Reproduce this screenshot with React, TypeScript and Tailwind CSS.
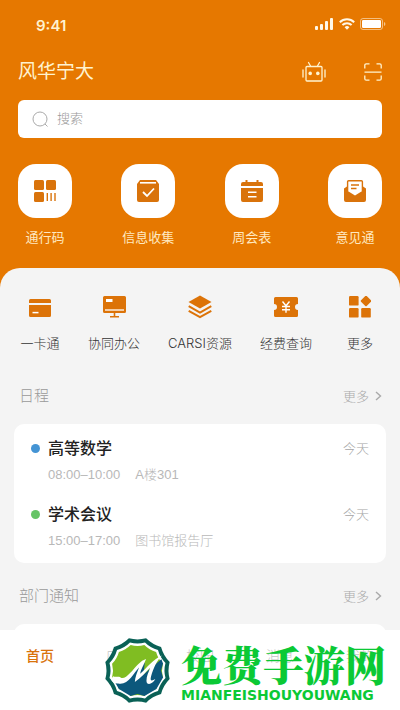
import type { ReactNode } from "react";

const quickActions = [
  { label: "通行码", icon: <PassCodeIcon /> },
  { label: "信息收集", icon: <CollectIcon /> },
  { label: "周会表", icon: <CalendarIcon /> },
  { label: "意见通", icon: <MailIcon /> },
];

const services = [
  { label: "一卡通", icon: <CardIcon /> },
  { label: "协同办公", icon: <MonitorIcon /> },
  { label: "CARSI资源", icon: <LayersIcon /> },
  { label: "经费查询", icon: <TicketIcon /> },
  { label: "更多", icon: <MoreIcon /> },
];

const schedule = [
  { title: "高等数学", time: "08:00–10:00", place: "A楼301", day: "今天", dot: "bg-[#4494d4]" },
  { title: "学术会议", time: "15:00–17:00", place: "图书馆报告厅", day: "今天", dot: "bg-[#66c466]" },
];

const tabs = ["首页", "应用", "校园", "消息", "我的"];

export default function App() {
  return (
    <div className="relative flex h-screen flex-col overflow-hidden bg-[#e67800] font-['Inter','Noto_Sans_CJK_SC',sans-serif]">
      <main className="min-h-0 flex-1 overflow-y-auto [scrollbar-width:none]">
        <StatusBar />
        <header className="px-[18px]">
          <div className="flex h-8 items-center justify-between text-[#fff3cf]">
            <h1 className="text-[19px] leading-8">风华宁大</h1>
            <div className="flex items-center gap-[38px]">
              <button type="button" aria-label="助手">
                <RobotIcon />
              </button>
              <button type="button" aria-label="扫一扫">
                <ScanIcon />
              </button>
            </div>
          </div>
          <label className="mt-3 flex h-[38px] items-center gap-2 rounded-md bg-white px-[14px]">
            <SearchIcon />
            <input
              type="search"
              aria-label="搜索"
              placeholder="搜索"
              className="min-w-0 flex-1 bg-transparent text-[13px] font-light outline-none placeholder:text-[#999]"
            />
          </label>
          <div className="mt-[26px] flex justify-between">
            {quickActions.map((action) => (
              <button key={action.label} type="button" className="flex w-[54px] flex-col items-center">
                <span className="flex size-[54px] items-center justify-center rounded-[18px] bg-white text-[#d9730b]">
                  {action.icon}
                </span>
                <span className="mt-[9px] text-[13px] leading-5 whitespace-nowrap text-[#ffe9c0]">{action.label}</span>
              </button>
            ))}
          </div>
        </header>

        <section className="mt-[21px] rounded-t-[20px] bg-[#f4f4f4] px-[14px] pt-[26px]">
          <div className="flex justify-between px-[6px]">
            {services.map((service) => (
              <button key={service.label} type="button" className="flex min-w-10 flex-col items-center text-[#dc7308]">
                <span className="flex h-[26px] items-center">{service.icon}</span>
                <span className="mt-[13px] text-[13px] leading-5 font-light text-[#333]">{service.label}</span>
              </button>
            ))}
          </div>

          <div className="pt-[31px]">
            <SectionTitle title="日程" />
          </div>
          <ul className="mt-4 rounded-[10px] bg-white pt-[14px] pb-[10px]">
            {schedule.map((item) => (
              <li key={item.title} className="flex h-[66px] px-[17px] last:h-[49px]">
                <span className={`mt-[6px] mr-2 size-[9px] shrink-0 rounded-full ${item.dot}`} />
                <div className="flex-1">
                  <h3 className="text-base leading-5 font-medium text-[#222]">{item.title}</h3>
                  <p className="mt-[7px] flex gap-[15px] font-['Liberation_Sans','Noto_Sans_CJK_SC',sans-serif] text-[13px] leading-5 font-light text-[#b8b8b8]">
                    <time>{item.time}</time>
                    <span>{item.place}</span>
                  </p>
                </div>
                <span className="text-[13px] leading-5 font-light text-[#a5a5a5]">{item.day}</span>
              </li>
            ))}
          </ul>

          <div className="pt-[21px]">
            <SectionTitle title="部门通知" />
          </div>
          <div className="mt-4 h-4 rounded-t-[10px] bg-white" />
        </section>
      </main>

      <nav className="flex h-20 shrink-0 bg-white pt-[15px]">
        {tabs.map((tab, index) => (
          <a
            key={tab}
            href="#"
            className={`flex-1 text-center text-sm leading-[22px] ${index === 0 ? "font-medium text-[#d9730b]" : "font-light text-[#c4c4c4]"}`}
          >
            {tab}
          </a>
        ))}
      </nav>

      <div className="pointer-events-none absolute right-[14px] bottom-[7px] flex items-end gap-[10px] text-[#0bc935]">
        <SiteLogo />
        <div className="flex flex-col">
          <strong className="font-['Noto_Serif_CJK_SC','Noto_Sans_CJK_SC',serif] text-[41px] leading-[46px] font-black whitespace-nowrap">
            免费手游网
          </strong>
          <span className="font-['DejaVu_Sans',sans-serif] text-[14px] leading-4 font-bold whitespace-nowrap">
            MIANFEISHOUYOUWANG
          </span>
        </div>
      </div>
    </div>
  );
}

function StatusBar() {
  return (
    <div className="flex h-14 items-center justify-between pr-[14px] pl-9 text-[#fff3cf]">
      <span className="mb-1 text-[15px] leading-5 font-semibold">9:41</span>
      <div className="mb-2 flex items-center gap-[5px] text-[#fff8e8]">
        <svg width="19" height="12" viewBox="0 0 19 12" fill="currentColor" aria-hidden="true">
          <rect x="0" y="8" width="3" height="4" rx="1" />
          <rect x="5" y="6" width="3" height="6" rx="1" />
          <rect x="10" y="3" width="3" height="9" rx="1" />
          <rect x="15" y="0" width="3" height="12" rx="1" />
        </svg>
        <svg width="16" height="12" viewBox="0 0 16 12" fill="none" stroke="currentColor" strokeWidth="2" aria-hidden="true">
          <path d="M.8 4.2a10.3 10.3 0 0 1 14.4 0M3.4 7a6.6 6.6 0 0 1 9.2 0" />
          <path d="M5.6 9.2a3.4 3.4 0 0 1 4.8 0L8 11.8Z" fill="currentColor" stroke="none" />
        </svg>
        <svg width="26" height="12" viewBox="0 0 26 12" aria-hidden="true">
          <rect x=".5" y=".5" width="22" height="11" rx="2.5" fill="none" stroke="currentColor" strokeOpacity=".55" />
          <rect x="2" y="2" width="19" height="8" rx="1.2" fill="#fff" />
          <path d="M24 4v4q1.4-.6 1.4-2T24 4" fill="currentColor" opacity=".6" />
        </svg>
      </div>
    </div>
  );
}

function SectionTitle({ title }: { title: string }) {
  return (
    <div className="flex items-center justify-between pr-1 pl-[5px]">
      <h2 className="text-[15px] leading-6 font-light text-[#999]">{title}</h2>
      <a href="#" className="flex items-center gap-[6px] text-[13px] leading-5 font-light text-[#aaa]">
        更多
        <svg width="7" height="10" viewBox="0 0 7 10" fill="none" stroke="currentColor" strokeWidth="1.4" aria-hidden="true">
          <path d="m1 1 4.5 4L1 9" />
        </svg>
      </a>
    </div>
  );
}

function Icon({ size = 22, children }: { size?: number; children: ReactNode }) {
  return (
    <svg width={size} height={size} viewBox={`0 0 ${size} ${size}`} fill="currentColor" aria-hidden="true">
      {children}
    </svg>
  );
}

function RobotIcon() {
  return (
    <svg width="24" height="22" viewBox="0 0 24 22" fill="none" stroke="currentColor" strokeWidth="1.3" strokeLinecap="round" aria-hidden="true">
      <rect x="4" y="5.5" width="16" height="14.5" rx="1" />
      <path d="m6.500 1.500 2 3.500M17.500 1.500l-2 3.500M1 9v7M23 9v7" />
      <circle cx="8.2" cy="12.4" r="1.8" fill="currentColor" stroke="none" />
      <circle cx="15.8" cy="12.4" r="1.8" fill="currentColor" stroke="none" />
    </svg>
  );
}

function ScanIcon() {
  return (
    <svg width="18" height="18" viewBox="0 0 18 18" fill="none" stroke="currentColor" strokeWidth="1.3" aria-hidden="true">
      <path d="M.8 5.5V2.3Q.8.8 2.3.8h3.2M12.5.8h3.2q1.5 0 1.5 1.5v3.2M.8 12.5v3.2q0 1.5 1.5 1.5h3.2M12.5 17.2h3.2q1.5 0 1.5-1.5v-3.2M.5 9.2h17" />
    </svg>
  );
}

function SearchIcon() {
  return (
    <svg width="17" height="17" viewBox="0 0 17 17" fill="none" stroke="#aaa" aria-hidden="true">
      <circle cx="8" cy="8" r="7" />
      <path d="m13 13 2.5 2.5" />
    </svg>
  );
}

function PassCodeIcon() {
  return (
    <Icon>
      <rect x="0" y="0" width="10" height="10" rx="1.5" />
      <rect x="12" y="0" width="10" height="10" rx="1.5" />
      <rect x="0" y="12" width="10" height="10" rx="1.5" />
      <path d="M12.6 13h1.4v8h-1.4zM16.4 13h1.4v8h-1.4zM20.3 13h1.4v8h-1.4z" />
    </Icon>
  );
}

function CollectIcon() {
  return (
    <Icon>
      <path d="M3 0h16l3 4v16a2 2 0 0 1-2 2H2a2 2 0 0 1-2-2V4Z" />
      <path d="M3 2.8h16" stroke="#fff" strokeWidth="1.6" />
      <path d="m6 12 4 4 7-7.500" fill="none" stroke="#fff" strokeWidth="1.8" />
    </Icon>
  );
}

function CalendarIcon() {
  return (
    <Icon>
      <path d="M4.5 0h2v2h9V0h2v2H20a2 2 0 0 1 2 2v2H0V4a2 2 0 0 1 2-2h2.5ZM0 8h22v12a2 2 0 0 1-2 2H2a2 2 0 0 1-2-2Z" />
      <path d="M7 12.3h8.500M7 16.7h8.500" stroke="#fff" strokeWidth="1.5" />
    </Icon>
  );
}

function MailIcon() {
  return (
    <Icon>
      <path d="M0 8.500 3 6.500v4l8 5 8-5v-4l3 2V20a2 2 0 0 1-2 2H2a2 2 0 0 1-2-2Z" />
      <path d="M3.600 11V1.800q0-1 1-1h12.800q1 0 1 1V11" fill="none" stroke="currentColor" strokeWidth="1.4" />
      <path d="M7 5h8M7 8.500h5.500" stroke="currentColor" strokeWidth="1.3" />
    </Icon>
  );
}

function CardIcon() {
  return (
    <Icon>
      <path d="M0 7V4.500Q0 3 1.500 3h19Q22 3 22 4.500V7ZM0 9h22v10.500q0 1.500-1.500 1.500h-19Q0 21 0 19.500Z" />
      <path d="M3.500 16.600h6" stroke="#fff" strokeWidth="1.5" />
    </Icon>
  );
}

function MonitorIcon() {
  return (
    <svg width="23" height="22" viewBox="0 0 23 22" fill="currentColor" aria-hidden="true">
      <path d="M1.500 0h20Q23 0 23 1.500v14q0 1.500-1.500 1.500H12.300v3H16v1.500H7V20h3.700v-3H1.500Q0 17 0 15.500v-14Q0 0 1.500 0Z" />
      <path d="M3 3h6.500v3H3z" fill="#fff" />
      <path d="M2 14h19" stroke="#fff" strokeWidth="1.3" />
    </svg>
  );
}

function LayersIcon() {
  return (
    <svg width="24" height="24" viewBox="0 0 24 24" fill="none" stroke="currentColor" strokeWidth="2" aria-hidden="true">
      <path d="M12 .5 23.500 7 12 13.500.5 7Z" fill="currentColor" stroke="none" />
      <path d="m.7 11.200 11.300 6.300 11.300-6.300M.7 15.900 12 22.200l11.300-6.300" />
    </svg>
  );
}

function TicketIcon() {
  return (
    <svg width="24" height="20" viewBox="0 0 24 20" fill="currentColor" aria-hidden="true">
      <path d="M1.500 0h21Q24 0 24 1.500V7a3 3 0 0 0 0 6v5.500q0 1.500-1.500 1.500h-21Q0 20 0 18.500V13a3 3 0 0 0 0-6V1.500Q0 0 1.500 0Z" />
      <path d="m8.500 4.500 3.500 4.300 3.500-4.300M12 8.800v7M8 9.500h8M8 12.800h8" fill="none" stroke="#fff" strokeWidth="1.4" />
    </svg>
  );
}

function MoreIcon() {
  return (
    <Icon>
      <rect x="0" y="0" width="9.6" height="9.6" rx="1.2" />
      <rect x="0" y="12" width="9.6" height="9.6" rx="1.2" />
      <rect x="12.2" y="12" width="9.6" height="9.6" rx="1.2" />
      <rect x="13" y="1" width="8" height="8" rx="1" transform="rotate(45 17 5)" />
    </Icon>
  );
}

function SiteLogo() {
  const badge =
    "M-26-97Q0-90 26-97 45-78 71-71 78-45 97-26 90 0 97 26 78 45 71 71 45 78 26 97 0 90-26 97-45 78-71 71-78 45-97 26-90 0-97-26-78-45-71-71-45-78-26-97Z";
  return (
    <svg width="67" height="65" viewBox="-100 -98 200 196" role="img" aria-label="免费手游网">
      <path d={badge} fill="#0a6156" />
      <path d={badge} fill="#fff" transform="scale(.87)" />
      <path d={badge} fill="#80bd22" transform="scale(.79)" />
      <path d="M-67 37Q-35 38-10 2L22-24 18 12 72-34 77-21 71 0 77 21 57 56 21 77 0 71-21 77-56 56Z" fill="#0c587c" />
      <path
        d="M-73 17C-66 23-56 14-50 22-35 28-15-2 2-19Q14-32 26-35C18-15 10-4 8 10 28-8 48-34 74-45 57-29 48-5 41 17 37 31 42 34 54 25 46 42 27 47 27 31 27 16 34 6 38-8 24 6 12 22-8 35-8 20 0 4 5-10-13 9-28 45-58 39-69 40-76 35-80 27Z"
        fill="#fff"
      />
    </svg>
  );
}
